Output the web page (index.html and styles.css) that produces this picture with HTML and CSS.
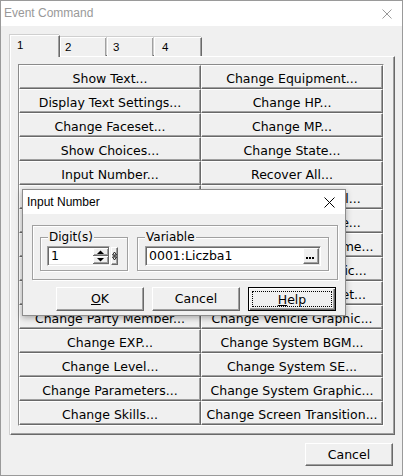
FILE: index.html
```html
<!DOCTYPE html>
<html>
<head>
<meta charset="utf-8">
<link rel="stylesheet" href="styles.css">
</head>
<body>
<div class="window">
  <div class="titlebar">
    <span class="title">Event Command</span>
    <svg class="close" width="10" height="10" viewBox="0 0 10 10"><path d="M0.5 0.5L9.5 9.5M9.5 0.5L0.5 9.5" stroke="#999" stroke-width="1"/></svg>
  </div>
  <div class="body">
    <div class="tabs">
      <div class="tab sel">1</div>
      <div class="tab t2">2</div>
      <div class="tab t3">3</div>
      <div class="tab t4">4</div>
    </div>
    <div class="panel">
      <div class="grid">
        <div class="btn cmd">Show Text...</div><div class="btn cmd">Change Equipment...</div>
        <div class="btn cmd">Display Text Settings...</div><div class="btn cmd">Change HP...</div>
        <div class="btn cmd">Change Faceset...</div><div class="btn cmd">Change MP...</div>
        <div class="btn cmd">Show Choices...</div><div class="btn cmd">Change State...</div>
        <div class="btn cmd">Input Number...</div><div class="btn cmd">Recover All...</div>
        <div class="btn cmd">Switch Operations...</div><div class="btn cmd">Deal Damage / Heal...</div>
        <div class="btn cmd">Variable Operations...</div><div class="btn cmd">Change Actor Name...</div>
        <div class="btn cmd">Timer Operations...</div><div class="btn cmd">Change Actor Nickname...</div>
        <div class="btn cmd">Change Money...</div><div class="btn cmd">Change Actor Graphic...</div>
        <div class="btn cmd">Change Items...</div><div class="btn cmd">Change Actor Faceset...</div>
        <div class="btn cmd">Change Party Member...</div><div class="btn cmd">Change Vehicle Graphic...</div>
        <div class="btn cmd">Change EXP...</div><div class="btn cmd">Change System BGM...</div>
        <div class="btn cmd">Change Level...</div><div class="btn cmd">Change System SE...</div>
        <div class="btn cmd">Change Parameters...</div><div class="btn cmd">Change System Graphic...</div>
        <div class="btn cmd">Change Skills...</div><div class="btn cmd">Change Screen Transition...</div>
      </div>
    </div>
    <div class="footer">
      <div class="btn push cancel-main">Cancel</div>
    </div>
  </div>

  <div class="dialog">
    <div class="dtitle">
      <span class="dtitle-text">Input Number</span>
      <svg class="dclose" width="11" height="11" viewBox="0 0 11 11"><path d="M0.5 0.5L10.5 10.5M10.5 0.5L0.5 10.5" stroke="#000" stroke-width="1"/></svg>
    </div>
    <div class="dbody">
      <div class="frame">
        <div class="group g1">
          <span class="glabel">Digit(s)</span>
          <div class="edit e1">
            <span class="val">1</span>
            <svg class="spin" width="16" height="16" viewBox="0 0 16 16">
              <rect x="0" y="0" width="16" height="16" fill="#f0f0f0"/>
              <path d="M0 0.5H15M0.5 0V7" stroke="#fff"/>
              <path d="M15.5 0V8M0 7.5H16" stroke="#696969"/>
              <path d="M14.5 1V7M1 6.5H15" stroke="#a0a0a0"/>
              <polygon points="4,6 11,6 7.5,2.5" fill="#000"/>
              <path d="M0 8.5H15M0.5 8V15" stroke="#fff"/>
              <path d="M15.5 8V16M0 15.5H16" stroke="#696969"/>
              <path d="M14.5 9V15M1 14.5H15" stroke="#a0a0a0"/>
              <polygon points="4,10 11,10 7.5,13.5" fill="#000"/>
            </svg>
          </div>
          <div class="mini">
            <svg width="7" height="18" viewBox="0 0 7 18">
              <path d="M1.5 8 L3.5 5 L5.5 8 Z M1.5 10 L3.5 13 L5.5 10 Z" fill="none" stroke="#000" stroke-width="0.8"/>
              <path d="M3 8V10M4 8V10" stroke="#000" stroke-width="0.6"/>
            </svg>
          </div>
        </div>
        <div class="group g2">
          <span class="glabel">Variable</span>
          <div class="edit e2">
            <span class="val">0001:Liczba1</span>
            <div class="dots">
              <svg width="14" height="14" viewBox="0 0 14 14">
                <rect x="2" y="8" width="2" height="2" fill="#000"/>
                <rect x="5" y="8" width="2" height="2" fill="#000"/>
                <rect x="8" y="8" width="2" height="2" fill="#000"/>
              </svg>
            </div>
          </div>
        </div>
      </div>
      <div class="dbuttons">
        <div class="btn push dbtn"><span><u>O</u>K</span></div>
        <div class="btn push dbtn"><span>Cancel</span></div>
        <div class="btn push dbtn default"><span class="focus"><u>H</u>elp</span></div>
      </div>
    </div>
  </div>
</div>
</body>
</html>
```

FILE: styles.css
```css
* { box-sizing: border-box; }

body {
  margin: 0;
  background: #ffffff;
  font-family: "DejaVu Sans", Verdana, sans-serif;
  color: #000;
}

.window {
  position: relative;
  width: 403px;
  height: 476px;
  border: 1px solid #9a9a9a;
  background: #f0f0f0;
  overflow: hidden;
}

.titlebar {
  height: 25px;
  background: #ffffff;
  display: flex;
  align-items: center;
  padding-left: 3px;
  font-family: "Liberation Sans", Arial, sans-serif;
  font-size: 12px;
  line-height: 25px;
  color: #999999;
}

.titlebar .close {
  margin-left: auto;
  margin-right: 10px;
}

.body {
  padding: 9px 7px 0 9px;
}

.tabs {
  display: flex;
  height: 21px;
}

.tab {
  position: relative;
  height: 19px;
  margin-top: 2px;
  background: #f0f0f0;
  border-top: 1px solid #ffffff;
  border-left: 1px solid #ffffff;
  border-right: 1px solid #696969;
  box-shadow: inset -1px 0 0 #a0a0a0, -1px -1px 0 #cfcfcf;
  font-family: "Liberation Sans", Arial, sans-serif;
  font-size: 11.5px;
  line-height: 13px;
  padding-top: 3px;
  padding-left: 4px;
}

.tab.sel {
  width: 50px;
  height: 22px;
  margin-top: 0;
  margin-bottom: -1px;
  z-index: 2;
  padding-left: 6px;
  padding-top: 3px;
}

.tab.t2 { width: 47px; padding-left: 4px; }
.tab.t3 { width: 47px; padding-left: 5px; }
.tab.t4 { width: 48px; padding-left: 7px; }

.panel {
  position: relative;
  z-index: 1;
  width: 385px;
  height: 379px;
  border: 1px solid;
  border-color: #ffffff #696969 #696969 #ffffff;
  box-shadow: inset -1px -1px 0 #a0a0a0, -1px 0 0 #cfcfcf;
  padding: 7px 0 0 7px;
}

.grid {
  display: grid;
  grid-template-columns: 182px 182px;
  grid-auto-rows: 24px;
  width: 366px;
  border-top: 1px solid #8a8a8a;
  border-left: 1px solid #8a8a8a;
  border-right: 1px solid #ffffff;
  border-bottom: 1px solid #ffffff;
}

.btn {
  background: #f0f0f0;
  border: 1px solid;
  border-color: #ffffff #696969 #696969 #ffffff;
  box-shadow: inset -1px -1px 0 #a0a0a0;
}

.cmd {
  font-size: 12.5px;
  line-height: 16px;
  padding-top: 5px;
  text-align: center;
  white-space: nowrap;
  overflow: hidden;
}

.footer {
  display: flex;
  justify-content: flex-end;
  padding-right: 2px;
  margin-top: 8px;
}

.push {
  font-size: 12.5px;
  line-height: 16px;
  text-align: center;
  white-space: nowrap;
}

.cancel-main {
  width: 88px;
  height: 23px;
  padding-top: 3px;
}

/* dialog */
.dialog {
  position: absolute;
  left: 21px;
  top: 188px;
  width: 324px;
  height: 127px;
  border: 1px solid #8c8c8c;
  background: #f0f0f0;
  box-shadow: 0 2px 6px rgba(0, 0, 0, 0.3);
  z-index: 5;
}

.dtitle {
  height: 24px;
  background: #ffffff;
  display: flex;
  align-items: center;
  padding-left: 4px;
  font-family: "Liberation Sans", Arial, sans-serif;
  font-size: 12px;
  line-height: 24px;
}

.dclose {
  margin-left: auto;
  margin-right: 10px;
}

.dbody {
  padding: 11px 0 0 9px;
}

.frame {
  display: flex;
  gap: 9px;
  width: 306px;
  height: 55px;
  border: 1px solid #a0a0a0;
  box-shadow: inset 1px 1px 0 #ffffff, 1px 1px 0 #ffffff;
  padding: 11px 0 0 7px;
}

.group {
  position: relative;
  display: flex;
  align-items: flex-start;
  height: 34px;
  border: 1px solid #a0a0a0;
  box-shadow: inset 1px 1px 0 #ffffff, 1px 1px 0 #ffffff;
  padding-top: 8px;
}

.g1 { width: 88px; padding-left: 6px; }
.g2 { width: 192px; padding-left: 7px; }

.glabel {
  position: absolute;
  top: -8px;
  left: 7px;
  padding: 0 1px;
  background: #f0f0f0;
  font-size: 12px;
  line-height: 15px;
}

.edit {
  display: flex;
  align-items: flex-start;
  height: 20px;
  background: #ffffff;
  border: 1px solid;
  border-color: #a0a0a0 #ffffff #ffffff #a0a0a0;
  box-shadow: inset 1px 1px 0 #696969, inset -1px -1px 0 #e3e3e3;
  padding: 1px 0 1px 3px;
  font-size: 12.5px;
  line-height: 16px;
}

.e1 { width: 63px; }
.e2 { width: 176px; }

.val { white-space: nowrap; }

.spin {
  display: block;
  margin-left: auto;
}

.mini {
  width: 7px;
  height: 18px;
  margin-left: 1px;
  margin-top: 1px;
  background: #f0f0f0;
  border: 1px solid;
  border-color: #ffffff #696969 #696969 #ffffff;
  box-shadow: inset -1px -1px 0 #a0a0a0;
  position: relative;
}

.mini svg {
  position: absolute;
  left: -1px;
  top: -1px;
}

.dots {
  margin-left: auto;
  margin-right: 1px;
  width: 16px;
  height: 16px;
  background: #f0f0f0;
  border: 1px solid;
  border-color: #ffffff #696969 #696969 #ffffff;
  box-shadow: inset -1px -1px 0 #a0a0a0;
}

.dots svg { display: block; }

.dbuttons {
  display: flex;
  gap: 8px;
  margin-top: 7px;
  padding-left: 24px;
}

.dbtn {
  width: 88px;
  height: 24px;
  padding-top: 3px;
  display: flex;
  justify-content: center;
}

.dbtn.default {
  border: 1px solid #000;
  box-shadow: inset 1px 1px 0 #ffffff, inset -1px -1px 0 #696969, inset -2px -2px 0 #a0a0a0;
  padding: 3px;
}

.dbtn .focus {
  flex: 1;
  border: 1px dotted #000;
  line-height: 14px;
  padding-top: 1px;
}
```
